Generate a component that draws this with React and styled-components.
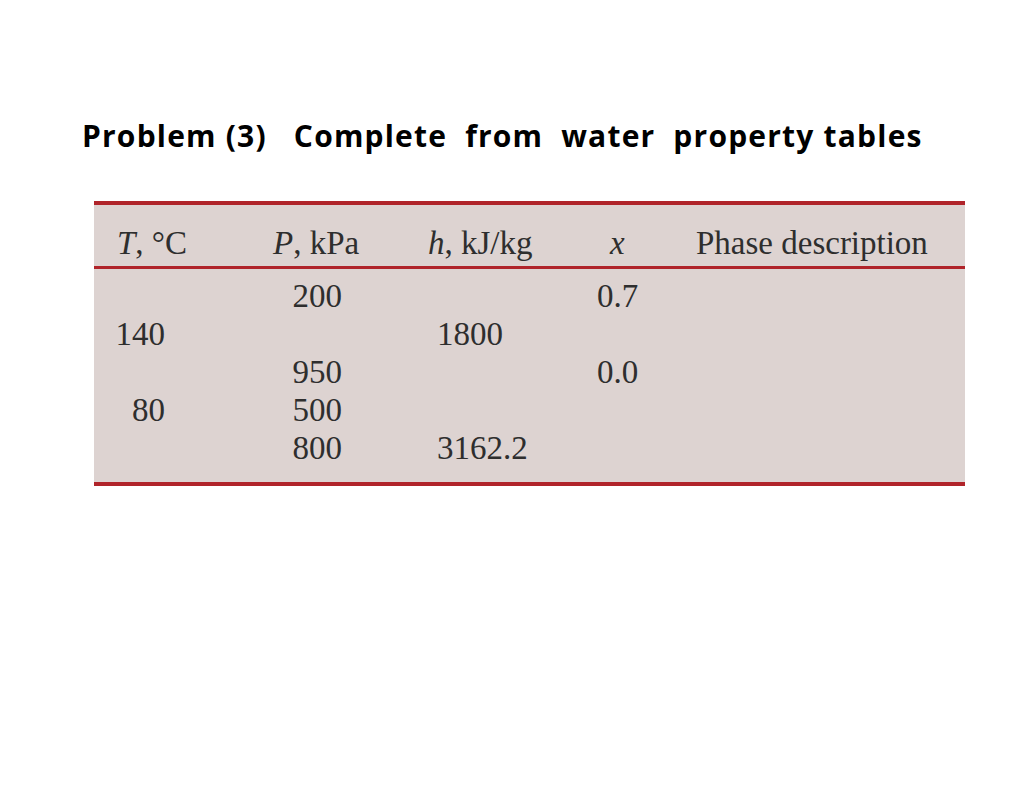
import styled, { createGlobalStyle } from "styled-components";

const GlobalStyle = createGlobalStyle`
  html, body {
    margin: 0;
    padding: 0;
    background: #ffffff;
  }
`;

const GRID = "136px 150px 180px 100px 305px";

const columns = [
  { key: "t", align: "right", pr: 65 },
  { key: "p", align: "right", pr: 38 },
  { key: "h", align: "left", pl: 57 },
  { key: "x", align: "left", pl: 37 },
  { key: "phase", align: "left", pl: 36 },
];

const rows = [
  { t: "", p: "200", h: "", x: "0.7", phase: "" },
  { t: "140", p: "", h: "1800", x: "", phase: "" },
  { t: "", p: "950", h: "", x: "0.0", phase: "" },
  { t: "80", p: "500", h: "", x: "", phase: "" },
  { t: "", p: "800", h: "3162.2", x: "", phase: "" },
];

const App = () => {
  return (
    <Page>
      <GlobalStyle />
      <Title>{"Problem (3)   Complete  from  water  property tables"}</Title>
      <Table>
        <HeadRow>
          <HeadCell $pl={23}>
            <i>T</i>, °C
          </HeadCell>
          <HeadCell $pl={43}>
            <i>P</i>, kPa
          </HeadCell>
          <HeadCell $pl={48}>
            <i>h</i>, kJ/kg
          </HeadCell>
          <HeadCell $pl={50}>
            <i>x</i>
          </HeadCell>
          <HeadCell $pl={36}>Phase description</HeadCell>
        </HeadRow>
        <Body>
          {rows.map((row, i) => (
            <Row key={i}>
              {columns.map((col) => (
                <Cell
                  key={col.key}
                  $align={col.align}
                  $pl={col.pl || 0}
                  $pr={col.pr || 0}
                >
                  {row[col.key]}
                </Cell>
              ))}
            </Row>
          ))}
        </Body>
      </Table>
    </Page>
  );
};

export default App;

const Page = styled.div`
  width: 1030px;
  height: 801px;
  background: #ffffff;
  padding-top: 116px;
  box-sizing: border-box;
`;

const Title = styled.h1`
  margin: 0 0 45px 82px;
  font-family: "Open Sans", "Liberation Sans", sans-serif;
  font-weight: 700;
  font-size: 30px;
  letter-spacing: 1.2px;
  line-height: 40px;
  color: #000000;
  white-space: pre;
`;

const Table = styled.div`
  margin-left: 94px;
  width: 871px;
  background: #ddd3d1;
  border-top: 4px solid #b0242a;
  border-bottom: 4px solid #b0242a;
  font-family: "Liberation Serif", "Times New Roman", serif;
  font-size: 33px;
  color: #2e2e2e;
`;

const HeadRow = styled.div`
  display: grid;
  grid-template-columns: ${GRID};
  height: 64px;
  align-items: start;
  border-bottom: 3px solid #b0242a;
  padding-top: 19px;
  box-sizing: border-box;
`;

const HeadCell = styled.div`
  padding-left: ${(p) => p.$pl}px;
  line-height: 38px;
  white-space: nowrap;

  i {
    font-style: italic;
  }
`;

const Body = styled.div`
  padding: 8px 0 15px;
`;

const Row = styled.div`
  display: grid;
  grid-template-columns: ${GRID};
  height: 38px;
  align-items: center;
`;

const Cell = styled.div`
  text-align: ${(p) => p.$align};
  padding-left: ${(p) => p.$pl}px;
  padding-right: ${(p) => p.$pr}px;
  line-height: 38px;
  white-space: nowrap;
`;
